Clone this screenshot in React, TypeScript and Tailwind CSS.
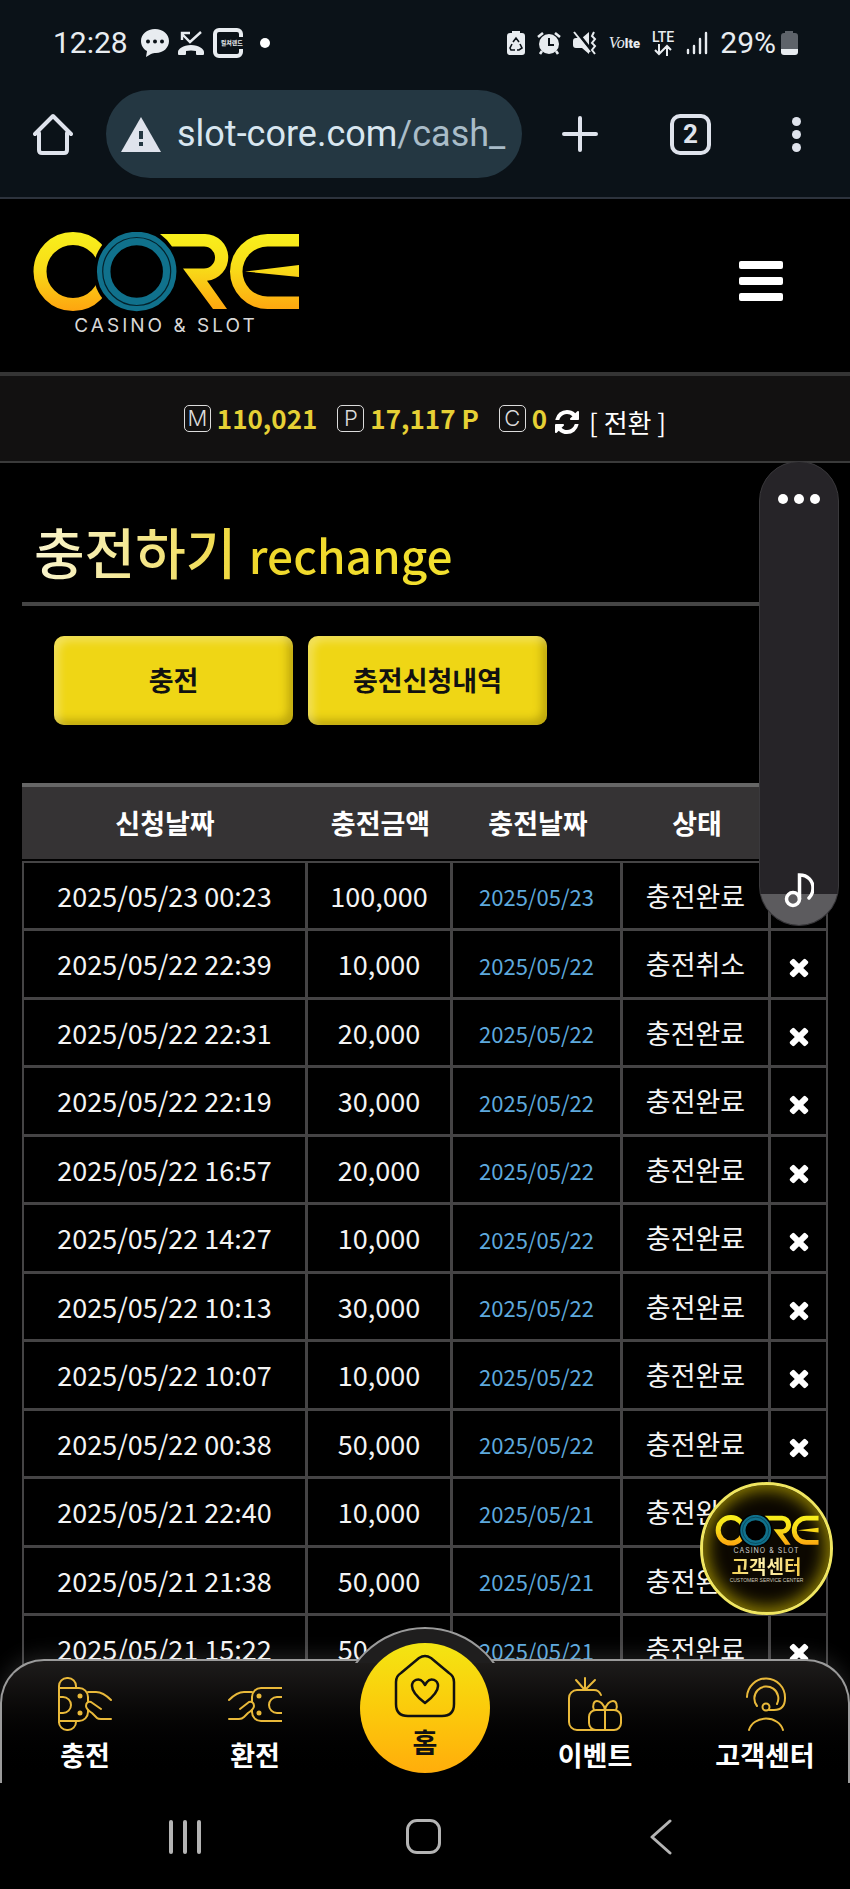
import { useId, useState } from 'react';
import type { ReactNode } from 'react';

const history = [
  { requested: '2025/05/23 00:23', amount: '100,000', charged: '2025/05/23', status: '충전완료' },
  { requested: '2025/05/22 22:39', amount: '10,000', charged: '2025/05/22', status: '충전취소' },
  { requested: '2025/05/22 22:31', amount: '20,000', charged: '2025/05/22', status: '충전완료' },
  { requested: '2025/05/22 22:19', amount: '30,000', charged: '2025/05/22', status: '충전완료' },
  { requested: '2025/05/22 16:57', amount: '20,000', charged: '2025/05/22', status: '충전완료' },
  { requested: '2025/05/22 14:27', amount: '10,000', charged: '2025/05/22', status: '충전완료' },
  { requested: '2025/05/22 10:13', amount: '30,000', charged: '2025/05/22', status: '충전완료' },
  { requested: '2025/05/22 10:07', amount: '10,000', charged: '2025/05/22', status: '충전완료' },
  { requested: '2025/05/22 00:38', amount: '50,000', charged: '2025/05/22', status: '충전완료' },
  { requested: '2025/05/21 22:40', amount: '10,000', charged: '2025/05/21', status: '충전완료' },
  { requested: '2025/05/21 21:38', amount: '50,000', charged: '2025/05/21', status: '충전완료' },
  { requested: '2025/05/21 15:22', amount: '50,000', charged: '2025/05/21', status: '충전완료' },
];

function CoreMark({ className }: { className: string }) {
  const id = useId();
  const fill = `url(#${id})`;

  return (
    <svg viewBox="0 0 266 80" className={className} role="img" aria-label="CORE">
      <defs>
        <linearGradient id={id} gradientUnits="userSpaceOnUse" x1="0" y1="0" x2="0" y2="80">
          <stop offset="0" stopColor="#f8f01c" />
          <stop offset="0.45" stopColor="#f8dc18" />
          <stop offset="1" stopColor="#fea30f" />
        </linearGradient>
      </defs>
      <circle cx="40" cy="39.5" r="33" fill="none" stroke={fill} strokeWidth="13" />
      <circle cx="103.7" cy="39.5" r="43.5" fill="#000" />
      <circle cx="103.7" cy="39.5" r="33" fill="none" stroke="#10718c" strokeWidth="13.5" />
      <circle cx="103.7" cy="39.5" r="34" fill="none" stroke="#04222c" strokeWidth="1.2" />
      <path fill={fill} d="M127 2H172A23.4 23.4 0 0 1 174 48.7L194 77H180L150 36.5H171A11 11 0 0 0 171 14.5H139Q134 7 127 2Z" />
      <path fill={fill} d="M266 2H234.500A37.500 37.500 0 0 0 234.500 77H266V64.500H234.500A25 25 0 0 1 234.500 14.500H266Z" />
      <path fill={fill} d="M212 39.500L266 33V45Z" />
    </svg>
  );
}

function StatusBar() {
  return (
    <div className="flex h-[86px] items-center justify-between pl-[53px] pr-[52px] text-[#e8ecf0] font-['Roboto',sans-serif]">
      <div className="flex items-center gap-[9px]">
        <span className="mr-1 text-[30px] leading-9">12:28</span>
        <svg viewBox="0 0 28 28" className="size-7">
          <path fill="currentColor" d="M14 0c8 0 14 5 14 12s-6 12-13 12c-2 0-3 0-5 1l-5 3 1-6C2 20 0 16 0 12 0 5 6 0 14 0Z" />
          <g fill="#0b1218">
            <circle cx="7" cy="12.500" r="2" />
            <circle cx="14" cy="12.500" r="2" />
            <circle cx="21" cy="12.500" r="2" />
          </g>
        </svg>
        <svg viewBox="0 0 26 26" className="size-[26px]">
          <path fill="none" stroke="currentColor" strokeWidth="2.400" d="M23 2L12 12 4 4M4 10V3h8" />
          <path fill="currentColor" d="M0 22c0-3 5-7 13-7s13 4 13 7v2q0 1-1 1h-6q-1 0-1-1v-3q-5-1-10 0v3q0 1-1 1H1q-1 0-1-1Z" />
        </svg>
        <div className="flex h-[30px] w-[30px] items-center justify-end rounded-[6px] border-[4px] border-[#e8ecf0]">
          <span className="-mr-1 bg-[#0b1218] text-[6px] leading-[12px] font-bold whitespace-nowrap font-['Noto_Sans_CJK_KR',sans-serif]">컬쳐랜드</span>
        </div>
        <span className="ml-2 size-[10px] rounded-full bg-white" />
      </div>
      <div className="flex items-center gap-3">
        <svg viewBox="0 0 18 24" className="h-6 w-[18px]">
          <path fill="currentColor" d="M5 0h8v2h2q3 0 3 3v16q0 3-3 3H3q-3 0-3-3V5q0-3 3-3h2Z" />
          <path fill="none" stroke="#0b1218" strokeWidth="1.600" d="M6 11l3-4 3 4M13 13l2 4-3 2h-2M8 19H4l-1-2 2-4" />
        </svg>
        <svg viewBox="0 0 24 24" className="size-6">
          <circle cx="12" cy="13" r="10" fill="currentColor" />
          <path stroke="currentColor" strokeWidth="2.600" fill="none" d="M1 6l5-4M18 2l5 4M5 20l-2 3M19 20l2 3" />
          <path stroke="#0b1218" strokeWidth="2" fill="none" d="M12 7v7h5" />
        </svg>
        <svg viewBox="0 0 24 24" className="size-6">
          <path fill="currentColor" d="M16 1v22l-7-6H3q-3 0-3-3v-4q0-3 3-3h6Z" />
          <path stroke="#0b1218" strokeWidth="3" d="M3 0l15 19" />
          <path stroke="currentColor" strokeWidth="2" d="M1 1l16 20" />
          <path fill="none" stroke="currentColor" strokeWidth="2" d="M21 1l-2 4 3 3-3 4 3 3-3 4 3 4" />
        </svg>
        <span className="flex items-baseline text-[13px] leading-4">
          <i className="font-['Liberation_Serif',serif] text-base">Vo</i>
          <b className="font-black">lte</b>
        </span>
        <div className="flex flex-col items-center">
          <span className="text-[14px] leading-[13px] font-medium">LTE</span>
          <svg viewBox="0 0 20 12" className="h-3 w-5">
            <path fill="none" stroke="currentColor" strokeWidth="2" d="M6 0v10M2 6l4 4 4-4M14 12V2M10 6l4-4 4 4" />
          </svg>
        </div>
        <svg viewBox="0 0 22 24" className="h-6 w-[22px]">
          <path stroke="currentColor" strokeWidth="2.400" strokeLinecap="round" d="M2 19v3M8 15v7M14 8v14M20 2v20" />
        </svg>
        <div className="flex items-center gap-[5px]">
          <span className="text-[30px] leading-9">29%</span>
          <svg viewBox="0 0 17 24" className="h-6 w-[17px]">
            <path fill="#5e636a" d="M4 0h8v2h2q3 0 3 3v13H0V5q0-3 3-3h1Z" />
            <path fill="currentColor" d="M0 18h17v3q0 3-3 3H3q-3 0-3-3Z" />
          </svg>
        </div>
      </div>
    </div>
  );
}

function BrowserBar() {
  return (
    <div className="flex items-center border-b-2 border-[#2d333d] pt-1 pr-[44px] pb-[19px] pl-[33px] text-[#dfe3ec] font-['Roboto',sans-serif]">
      <button aria-label="Home">
        <svg viewBox="0 0 40 42" className="block h-[42px] w-10" fill="none" stroke="currentColor" strokeWidth="4" strokeLinecap="round" strokeLinejoin="round">
          <path d="M2 21L20 3l18 18M6 20v17q0 3 3 3h22q3 0 3-3V20" />
        </svg>
      </button>
      <div className="ml-[33px] flex h-[88px] flex-1 items-center gap-4 rounded-full bg-[#243742] pl-[15px]">
        <svg viewBox="0 0 40 35" className="h-[35px] w-10 shrink-0">
          <path fill="#dfe3ec" d="M20 0L40 35H0Z" />
          <path fill="#243742" d="M18 14h4v8h-4zM18 25h4v4h-4z" />
        </svg>
        <span className="text-[36px] leading-[48px] whitespace-nowrap text-[#d8e6f0]">
          slot-core.com<span className="text-[#a9bcc8]">/cash_</span>
        </span>
      </div>
      <button aria-label="New tab" className="ml-10">
        <svg viewBox="0 0 36 36" className="block size-9" stroke="currentColor" strokeWidth="4" strokeLinecap="round">
          <path d="M18 2v32M2 18h32" />
        </svg>
      </button>
      <button aria-label="Tabs" className="ml-[72px] flex size-[41px] items-center justify-center rounded-[10px] border-4 border-[#dfe3ec] text-[26px] leading-8 font-bold">
        2
      </button>
      <button aria-label="More" className="ml-[75px] flex w-5 flex-col items-center gap-1">
        <span className="size-[9px] rounded-full bg-[#dfe3ec]" />
        <span className="size-[9px] rounded-full bg-[#dfe3ec]" />
        <span className="size-[9px] rounded-full bg-[#dfe3ec]" />
      </button>
    </div>
  );
}

function SiteHeader() {
  return (
    <header className="flex items-center justify-between pt-[33px] pr-[67px] pb-[33px] pl-[33px]">
      <a href="#home" className="flex flex-col items-center">
        <CoreMark className="h-20 w-[266px]" />
        <span className="text-[19px] leading-[27px] tracking-[3px] text-[#d8d8d8] font-['Inter',sans-serif]">CASINO &amp; SLOT</span>
      </a>
      <button aria-label="메뉴" className="mb-[10px] flex w-11 flex-col gap-2">
        <span className="h-2 rounded-[2px] bg-white" />
        <span className="h-2 rounded-[2px] bg-white" />
        <span className="h-2 rounded-[2px] bg-white" />
      </button>
    </header>
  );
}

function Balance({ letter, value }: { letter: string; value: string }) {
  return (
    <div className="flex items-center gap-[6px]">
      <span className="flex size-[27px] items-center justify-center rounded-[5px] border border-[#dcdcdc] text-[22px] leading-6 font-light text-[#dcdcdc] font-['Inter',sans-serif]">{letter}</span>
      <span className="font-bold text-[#e6d035]">{value}</span>
    </div>
  );
}

function BalanceBar() {
  return (
    <div className="flex items-center justify-center gap-[20px] border-t-4 border-b-2 border-t-[#343434] border-b-[#3a3a3a] bg-[#121111] pb-[1px] text-[26px] leading-[84px]">
      <Balance letter="M" value="110,021" />
      <Balance letter="P" value="17,117 P" />
      <div className="flex items-center gap-[6px]">
        <Balance letter="C" value="0" />
        <button className="flex items-center gap-2 pt-2 leading-[76px] text-white">
          <svg viewBox="0 0 1792 1792" className="size-7" fill="currentColor">
            <path d="M1639 1056q0 5-1 7-64 268-268 434.500t-478 166.500q-146 0-282.500-55t-243.500-157l-129 129q-19 19-45 19t-45-19-19-45v-448q0-26 19-45t45-19h448q26 0 45 19t19 45-19 45l-137 137q71 66 161 102t187 36q134 0 250-65t186-179q11-17 53-117 8-23 30-23h192q13 0 22.500 9.500t9.500 22.500zm25-800v448q0 26-19 45t-45 19h-448q-26 0-45-19t-19-45 19-45l138-138q-148-137-349-137-134 0-250 65t-186 179q-11 17-53 117-8 23-30 23h-199q-13 0-22.500-9.500t-9.500-22.500v-7q65-268 270-434.500t480-166.500q146 0 284 55.500t245 156.500l130-129q19-19 45-19t45 19 19 45z" />
          </svg>
          [ 전환 ]
        </button>
      </div>
    </div>
  );
}

function HistoryTable() {
  const [rows, setRows] = useState(history);
  const cell = 'border-r-3 border-b-3 border-[#454445] p-0 text-center first:border-l-2 last:border-r-2 group-first:border-t-2';

  return (
    <table className="mt-[58px] w-full table-fixed border-separate border-spacing-0 text-[27px] leading-9">
      <colgroup>
        <col className="w-[286px]" />
        <col className="w-[145px]" />
        <col className="w-[170px]" />
        <col className="w-[148px]" />
        <col className="w-[57px]" />
      </colgroup>
      <thead>
        <tr className="h-[78px]">
          {['신청날짜', '충전금액', '충전날짜', '상태', ''].map((label) => (
            <th key={label} className="border-t-4 border-b-2 border-t-[#666] border-b-black bg-[#353334] p-0 font-bold text-white">
              {label}
            </th>
          ))}
        </tr>
      </thead>
      <tbody className="text-[#f4f4f4]">
        {rows.map((row) => (
          <tr key={row.requested} className="group h-[68px] first:h-[70px] even:h-[69px]">
            <td className={cell}>{row.requested}</td>
            <td className={cell}>{row.amount}</td>
            <td className={cell}>
              <span className="text-[22px] text-[#5ea9dd]">{row.charged}</span>
            </td>
            <td className={cell}>{row.status}</td>
            <td className={cell}>
              <button
                aria-label="삭제"
                className="block w-full pt-[6px] text-white"
                onClick={() => setRows(rows.filter((r) => r !== row))}
              >
                <svg viewBox="0 0 1792 1792" className="mx-auto size-7" fill="currentColor">
                  <path d="M1490 1322q0 40-28 68l-136 136q-28 28-68 28t-68-28l-294-294-294 294q-28 28-68 28t-68-28l-136-136q-28-28-28-68t28-68l294-294-294-294q-28-28-28-68t28-68l136-136q28-28 68-28t68 28l294 294 294-294q28-28 68-28t68 28l136 136q28 28 28 68t-28 68l-294 294 294 294q28 28 28 68z" />
                </svg>
              </button>
            </td>
          </tr>
        ))}
      </tbody>
    </table>
  );
}

// Volume slider that floats over the page
function VolumePanel() {
  return (
    <div className="absolute -top-[2px] right-[11px] flex h-[465px] w-20 flex-col overflow-hidden rounded-full border border-[#3a393c] bg-[#262428]">
      <div className="flex justify-center gap-[6px] pt-[32px]">
        <span className="size-[10px] rounded-full bg-white" />
        <span className="size-[10px] rounded-full bg-white" />
        <span className="size-[10px] rounded-full bg-white" />
      </div>
      <div className="mt-auto flex h-[31px] items-end justify-center bg-[#5c5b5e] pb-[17px]">
        <svg viewBox="0 0 30 36" className="h-9 w-[30px] shrink-0" fill="none" stroke="#fff" strokeWidth="3.500" strokeLinecap="round">
          <circle cx="9" cy="27" r="6.500" />
          <path d="M15.500 27V3C24 3 29 9 29 16q0 6-4 10" />
        </svg>
      </div>
    </div>
  );
}

function ServiceBadge() {
  return (
    <a
      href="#support"
      className="absolute right-[17px] bottom-[70px] flex size-[133px] flex-col items-center rounded-full border-[3px] border-[#f0e660] bg-[#0c0800] pt-[30px] shadow-[inset_0_0_16px_5px_#8a7a00]"
    >
      <CoreMark className="h-[31px] w-[104px]" />
      <span className="text-[7px] leading-[9px] tracking-[1px] text-[#cfcfcf] font-['Inter',sans-serif]">CASINO &amp; SLOT</span>
      <span className="bg-gradient-to-r from-[#f0d050] via-[#fff3b0] to-[#f0c840] bg-clip-text text-[19px] leading-[22px] font-bold text-transparent">고객센터</span>
      <span className="text-[5px] leading-[6px] whitespace-nowrap text-[#cfc9b8] font-['Liberation_Sans',sans-serif]">CUSTOMER SERVICE CENTER</span>
    </a>
  );
}

function NavItem({ label, children }: { label: string; children: ReactNode }) {
  return (
    <a href={`#${label}`} className="flex flex-1 flex-col items-center pt-4 text-[27px] leading-9 font-bold text-white">
      <svg viewBox="0 0 54 54" className="mb-[6px] size-[54px]" fill="none" stroke="#e9b93a" strokeWidth="2" strokeLinecap="round" strokeLinejoin="round">
        {children}
      </svg>
      {label}
    </a>
  );
}

function BottomNav() {
  return (
    <nav className="relative -mt-[26px] h-[124px] rounded-t-[44px] border-x-2 border-t-2 border-[#9b9b9b] bg-gradient-to-b from-[#1e1c1b] to-black shadow-[0_-4px_20px_rgba(255,255,255,0.12)]">
      <div className="absolute -top-[34px] left-1/2 h-[36px] w-[172px] -translate-x-1/2 overflow-hidden">
        <div className="size-[172px] rounded-full border-2 border-[#9b9b9b] bg-[#1f1e1e]" />
      </div>
      <div className="-mx-[2px] flex">
        <NavItem label="충전">
          <path d="M1 46V9a8 8 0 0 1 8-8h1a8 8 0 0 1 8 8v2M1 45a8 8 0 0 0 8 8h1a8 8 0 0 0 8-8v-1" />
          <path d="M1 11h20a9 9 0 0 1 9 9v5M1 44h20a9 9 0 0 0 9-9v-2M2 20h3a8 8 0 0 1 0 16H2" />
          <circle cx="22" cy="19" r="1.500" fill="#e9b93a" />
          <circle cx="22" cy="36" r="1.500" fill="#e9b93a" />
          <path d="M30 15h8q7 0 15 8M43 32l-10-7c-3-1-5 1-5 4 0 2 3 5 6 7l5 5q1 1 4 1h10" />
        </NavItem>
        <NavItem label="환전">
          <path d="M54 11H33a9 9 0 0 0-9 9v5M54 44H33a9 9 0 0 1-9-9v-2M54 20h-5a8 8 0 0 0 0 16h5" />
          <circle cx="31" cy="19" r="1.500" fill="#e9b93a" />
          <circle cx="31" cy="36" r="1.500" fill="#e9b93a" />
          <path d="M24 15h-8q-7 0-15 8M12 32l9-7c3-1 5 1 5 4 0 2-3 5-6 7l-4 4q-2 2-5 2H1" />
        </NavItem>
        <a href="#home" className="relative flex flex-1 justify-center">
          <span className="-mt-[18px] flex size-[130px] shrink-0 flex-col items-center rounded-full bg-gradient-to-b from-[#f3e512] via-[#fbcb0b] to-[#ffad0b] pt-[11px] text-[27px] leading-9 font-bold text-[#111]">
            <svg viewBox="0 0 62 64" className="mb-[6px] h-16 w-[62px]" fill="none" stroke="#111" strokeWidth="2.500" strokeLinejoin="round">
              <path d="M2 28q0-6 5-9L25 4q6-4 12 0L55 19q5 3 5 9V50q0 12-12 12H14q-12 0-12-12Z" />
              <path d="M31 49C23 43 18 38 18 32 18 26 25 23 29 28L31 31 33 28C37 23 44 26 44 32 44 38 39 43 31 49Z" />
            </svg>
            홈
          </span>
        </a>
        <NavItem label="이벤트">
          <path d="M33 18q-2-5-7-5H9a8 8 0 0 0-8 8v24a8 8 0 0 0 8 8h30M17 1v11M8 3l8 9M27 3l-9 9" />
          <rect x="21" y="33" width="32" height="20" rx="7" />
          <path d="M37 33v20M37 33c-1-6-5-9-8-9s-5 4-3 9M37 33c1-6 5-9 8-9s5 4 3 9" />
        </NavItem>
        <NavItem label="고객센터">
          <path d="M9 20A19 19 0 0 1 47 21C47 29 43 33 36 33H31M19 29A12 12 0 1 1 39 27M11 53A17.500 15 0 0 1 45 53" />
          <circle cx="28" cy="30" r="3.500" />
        </NavItem>
      </div>
    </nav>
  );
}

function SystemNav() {
  return (
    <div className="relative flex h-[107px] items-center bg-black pr-[70px] pl-[66px] text-[#b4b4b4]">
      <button aria-label="Recents" className="flex flex-1 justify-center gap-[10px]">
        <span className="h-[34px] w-1 rounded-full bg-[#b4b4b4]" />
        <span className="h-[34px] w-1 rounded-full bg-[#b4b4b4]" />
        <span className="h-[34px] w-1 rounded-full bg-[#b4b4b4]" />
      </button>
      <button aria-label="Home" className="flex flex-1 justify-center">
        <span className="size-[35px] rounded-[11px] border-3 border-[#b4b4b4]" />
      </button>
      <button aria-label="Back" className="flex flex-1 justify-center">
        <svg viewBox="0 0 22 36" className="h-9 w-[22px]" fill="none" stroke="currentColor" strokeWidth="3" strokeLinecap="round" strokeLinejoin="round">
          <path d="M20 2L2 18l18 16" />
        </svg>
      </button>
    </div>
  );
}

export default function App() {
  const button =
    "h-[89px] w-[239px] rounded-[10px] bg-[#efd615] text-[27px] font-bold text-[#111] shadow-[inset_5px_5px_8px_rgba(255,255,255,0.3),inset_-5px_-5px_8px_rgba(130,110,0,0.45)]";

  return (
    <div className="w-full bg-black text-white font-['Noto_Sans_CJK_KR',sans-serif]">
      <div className="bg-[#0b1218]">
        <StatusBar />
        <BrowserBar />
      </div>
      <SiteHeader />
      <BalanceBar />
      <main className="relative px-[22px]">
        <h1 className="h-[143px] border-b-4 border-[#454545] pt-[55px] pl-3 text-[55px] leading-[64px] font-medium">
          <span className="bg-gradient-to-r from-[#faf5cf] via-[#efd72c] to-[#f2e02e] bg-clip-text text-transparent">
            충전하기 <small className="text-[46px] font-medium">rechange</small>
          </span>
        </h1>
        <div className="mt-[30px] flex gap-[15px] pl-8">
          <button className={button}>충전</button>
          <button className={button}>충전신청내역</button>
        </div>
        <HistoryTable />
        <VolumePanel />
        <ServiceBadge />
      </main>
      <BottomNav />
      <SystemNav />
    </div>
  );
}
